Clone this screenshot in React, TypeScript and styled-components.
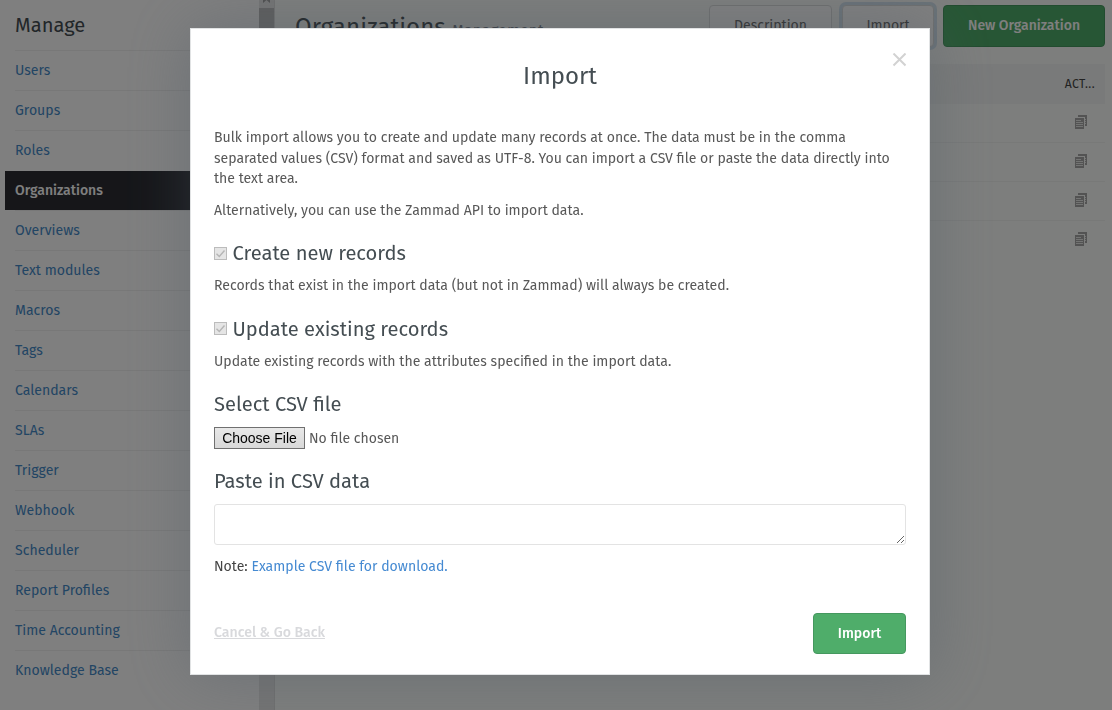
import React from 'react';
import styled, { createGlobalStyle } from 'styled-components';

const Global = createGlobalStyle`
  * { box-sizing: border-box; }
  html, body, #root { height: 100%; margin: 0; }
  body {
    overflow: hidden;
    background: #fff;
    color: #444;
    font: 14.07px/20px "Fira Sans", "Noto Sans", "Open Sans", sans-serif;
  }
  h1, h2, h3, p { margin: 0; font-weight: 400; }
`;

const Page = styled.div`
  display: flex;
  height: 710px;
  overflow: hidden;
`;

const Sidebar = styled.nav`
  width: 259px;
  padding-left: 15px;
  flex: none;
  background: #fff;
`;

const SidebarTitle = styled.h2`
  height: 50px;
  font-size: 20.15px;
  line-height: 50px;
  color: #444d52;
`;

const NavItem = styled.a<{ $active?: boolean }>`
  display: block;
  height: 40px;
  border-top: 1px solid ${p => (p.$active ? '#fff' : '#f0f0f0')};
  line-height: 39px;
  white-space: nowrap;
  color: #458ac8;
  ${p => p.$active && `
    margin-left: -10px;
    padding-left: 10px;
    color: #fff;
    font-size: 14px;
    font-weight: 500;
    background: #2c2d33;
    background-clip: padding-box;
  `}
`;

const Scrollbar = styled.div`
  display: flex;
  flex-direction: column;
  align-items: center;
  width: 16px;
  flex: none;
  background: #e8e8e8;
  border-right: 1px solid #dedede;
`;

const ScrollArrow = styled.svg`
  width: 15px;
  height: 8px;
  flex: none;
`;

const ScrollThumb = styled.div`
  width: 100%;
  height: 560px;
  background: #bcbcbc;
`;

const Main = styled.main`
  flex: 1;
  min-width: 0;
  padding: 5px 7px 0 20px;
  background: #fafcfb;
`;

const Header = styled.header`
  display: flex;
  height: 59px;
  align-items: flex-start;
`;

const PageTitle = styled.h1`
  flex: 1;
  font-size: 24px;
  line-height: 44px;
  letter-spacing: 0.1px;
  color: #444d52;
  white-space: nowrap;
`;

const Sub = styled.small`
  font-size: 15.2px;
  letter-spacing: 0.3px;
  color: #77818a;
`;

const Button = styled.button<{ $primary?: boolean; $focus?: boolean; $w: number; $gap?: number; $h?: number }>`
  width: ${p => p.$w}px;
  height: ${p => p.$h ?? 42}px;
  margin: 0 0 0 ${p => p.$gap ?? 0}px;
  padding: ${p => (p.$h ? '1px 0 0' : '0 0 1px')};
  border: 1px solid ${p => (p.$primary ? '#45985f' : '#dcdede')};
  border-radius: 4px;
  background: ${p => (p.$primary ? '#4fad6a' : '#fff')};
  color: ${p => (p.$primary ? '#fff' : '#666')};
  font: inherit;
  font-size: 14px;
  font-weight: ${p => (p.$primary ? 500 : 400)};
  white-space: nowrap;
  ${p => p.$focus && 'box-shadow: 0 0 0 3px #d3e3ef;'}
`;

const TableHead = styled.div`
  height: 40px;
  padding: 0 10px;
  background: #f3f5f4;
  color: #444;
  text-align: right;
  font-size: 12.2px;
  letter-spacing: 0.4px;
  line-height: 40px;
`;

const TableRow = styled.div`
  display: flex;
  height: 38px;
  padding: 0 18px 2px;
  justify-content: flex-end;
  align-items: center;
  & + & { height: 39px; border-top: 1px solid #f0f2f1; }
`;

const Backdrop = styled.div`
  position: fixed;
  inset: 0;
  display: flex;
  justify-content: center;
  align-items: flex-start;
  padding: 28px 0 0 8px;
  background: rgba(0, 0, 0, 0.5);
`;

const Dialog = styled.section`
  position: relative;
  width: 740px;
  height: 647px;
  padding: 0 23px;
  border: 1px solid #e1e3e4;
  background: #fff;
  box-shadow: 0 0 60px rgba(77, 91, 103, 0.4);
`;

const Close = styled.svg`
  position: absolute;
  top: 24px;
  right: 23px;
  width: 14px;
  height: 14px;
`;

const DialogTitle = styled.h2`
  height: 98px;
  font-size: 24px;
  line-height: 94px;
  text-align: center;
  color: #444d52;
`;

const Text = styled.p<{ $mb?: number; $strong?: boolean }>`
  padding-top: 1px;
  margin-bottom: ${p => p.$mb ?? 0}px;
  color: ${p => (p.$strong ? '#444' : '#585858')};
  line-height: 20.5px;
`;

const SectionTitle = styled.h3<{ $mb?: number }>`
  display: flex;
  align-items: center;
  height: 28px;
  gap: 5.5px;
  margin-bottom: ${p => p.$mb ?? 8}px;
  font-size: 20.15px;
  line-height: 26px;
  color: #444d52;
`;

const CheckBox = styled.svg`
  width: 13px;
  height: 13px;
  margin-top: 0.5px;
`;

const FileRow = styled.div`
  display: flex;
  height: 22px;
  gap: 4px;
  align-items: center;
  margin-bottom: 18px;
  color: #585858;
`;

const FileName = styled.span`
  padding-top: 2px;
  font-size: 14px;
`;

const FileButton = styled.button`
  width: 91px;
  height: 22px;
  padding: 0;
  border: 1px solid #707070;
  background: linear-gradient(#e8e8e8, #d8d8d8);
  color: #000;
  font: 14px/18px "Liberation Sans", Arial, sans-serif;
`;

const Area = styled.textarea`
  display: block;
  width: 100%;
  height: 41px;
  margin: 0 0 11px;
  border: 1px solid #e3e3e3;
  border-radius: 3px;
  background: #fff;
  resize: vertical;
`;

const Link = styled.a`
  color: #458ad2;
`;

const Footer = styled.footer`
  display: flex;
  justify-content: space-between;
  align-items: center;
  height: 41px;
  margin-top: 35.5px;
`;

const Cancel = styled.a`
  margin-top: -1px;
  color: #d8d9dc;
  font-size: 14.1px;
  font-weight: 500;
  text-decoration: underline;
`;

const nav = [
  'Users', 'Groups', 'Roles', 'Organizations', 'Overviews', 'Text modules', 'Macros', 'Tags',
  'Calendars', 'SLAs', 'Trigger', 'Webhook', 'Scheduler', 'Report Profiles', 'Time Accounting',
  'Knowledge Base',
];

const CopyIcon = () => (
  <svg width="12" height="14" viewBox="0 0 12 14" shapeRendering="crispEdges">
    <path d="M3 0h9v11h-2V2H3z" fill="#a6a6a6" />
    <path d="M10 4h1v1h-1zM10 6h1v1h-1zM10 8h1v1h-1z" fill="#e6e8e7" />
    <path d="M0 3h9v11H0z" fill="#a6a6a6" />
    <path d="M1 5h5v1H1zM1 7h7v1H1zM1 9h7v1H1zM1 11h7v1H1z" fill="#e6e8e7" />
  </svg>
);

const Checked = () => (
  <CheckBox viewBox="0 0 13 13">
    <rect x=".5" y=".5" width="12" height="12" fill="#e5e5e5" stroke="#bcbcbc" />
    <path d="M2.500 6.800l2.800 2.700 5.200-6" fill="none" stroke="#b5b5b5" strokeWidth="1.400" />
  </CheckBox>
);

export default function App() {
  return (
    <>
      <Global />
      <Page>
        <Sidebar>
          <SidebarTitle>Manage</SidebarTitle>
          {nav.map(name => (
            <NavItem key={name} $active={name === 'Organizations'}>{name}</NavItem>
          ))}
        </Sidebar>
        <Scrollbar>
          <ScrollArrow viewBox="0 0 15 8"><path d="M4 3V0h7v3L7.500 0z" fill="#a0a0a0" /></ScrollArrow>
          <ScrollThumb />
        </Scrollbar>
        <Main>
          <Header>
            <PageTitle>Organizations <Sub>Management</Sub></PageTitle>
            <Button $w={123}>Description</Button>
            <Button $w={92} $gap={10} $focus>Import</Button>
            <Button $w={162} $gap={9} $primary>New Organization</Button>
          </Header>
          <TableHead>ACT...</TableHead>
          {[0, 1, 2, 3].map(i => <TableRow key={i}><CopyIcon /></TableRow>)}
        </Main>
      </Page>
      <Backdrop>
        <Dialog>
          <Close viewBox="0 0 14 14"><path d="M1.500 .5l12 12M13.500 .5l-12 12" stroke="#d2d2d2" strokeWidth="2" fill="none" /></Close>
          <DialogTitle>Import</DialogTitle>
          <Text $mb={10}>
            Bulk import allows you to create and update many records at once. The data must be in the comma
            separated values (CSV) format and saved as UTF-8. You can import a CSV file or paste the data directly into
            the text area.
          </Text>
          <Text $mb={18}>Alternatively, you can use the Zammad API to import data.</Text>
          <SectionTitle>
            <Checked />Create new records
          </SectionTitle>
          <Text $mb={18}>Records that exist in the import data (but not in Zammad) will always be created.</Text>
          <SectionTitle>
            <Checked />Update existing records
          </SectionTitle>
          <Text $mb={18}>Update existing records with the attributes specified in the import data.</Text>
          <SectionTitle $mb={9}>Select CSV file</SectionTitle>
          <FileRow>
            <FileButton>Choose File</FileButton>
            <FileName>No file chosen</FileName>
          </FileRow>
          <SectionTitle $mb={9}>Paste in CSV data</SectionTitle>
          <Area />
          <Text $strong>Note: <Link>Example CSV file for download.</Link></Text>
          <Footer>
            <Cancel>Cancel &amp; Go Back</Cancel>
            <Button $w={93} $h={41} $primary>Import</Button>
          </Footer>
        </Dialog>
      </Backdrop>
    </>
  );
}
